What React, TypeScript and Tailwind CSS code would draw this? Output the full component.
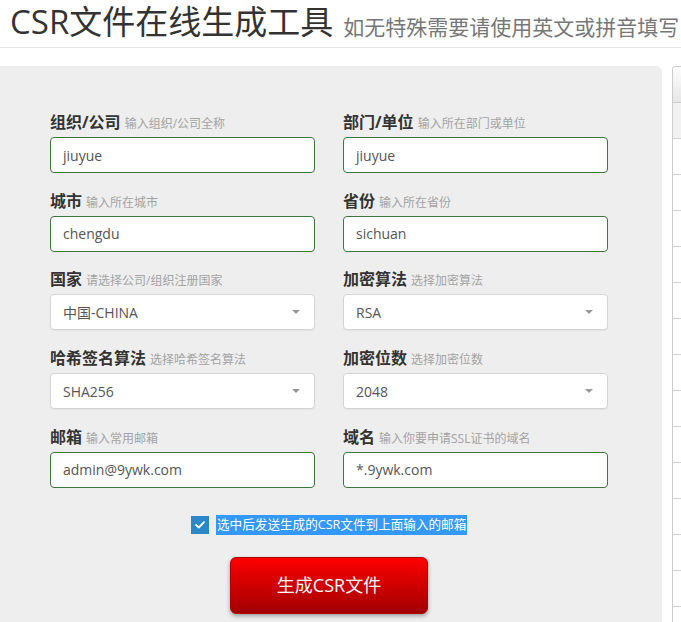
import React from 'react';

type Field = {
  label: string;
  hint: string;
  value: string;
  select?: boolean;
};

const fields: Field[] = [
  { label: '组织/公司', hint: '输入组织/公司全称', value: 'jiuyue' },
  { label: '部门/单位', hint: '输入所在部门或单位', value: 'jiuyue' },
  { label: '城市', hint: '输入所在城市', value: 'chengdu' },
  { label: '省份', hint: '输入所在省份', value: 'sichuan' },
  { label: '国家', hint: '请选择公司/组织注册国家', value: '中国-CHINA', select: true },
  { label: '加密算法', hint: '选择加密算法', value: 'RSA', select: true },
  { label: '哈希签名算法', hint: '选择哈希签名算法', value: 'SHA256', select: true },
  { label: '加密位数', hint: '选择加密位数', value: '2048', select: true },
  { label: '邮箱', hint: '输入常用邮箱', value: 'admin@9ywk.com' },
  { label: '域名', hint: '输入你要申请SSL证书的域名', value: '*.9ywk.com' },
];

const FormField: React.FC<{ field: Field }> = ({ field }) => (
  <div className="flex flex-col w-[265px]">
    <div className="flex items-baseline gap-1 h-[20px] leading-[20px] overflow-visible">
      <span className="text-[16px] font-bold text-[#333]">{field.label}</span>
      <span className="text-[12px] text-[#a3a3a3]">{field.hint}</span>
    </div>
    {field.select ? (
      <div className="mt-[5px] h-[36px] flex items-center justify-between px-3 bg-white border border-[#d4d4d4] rounded-[4px] shadow-[0_1px_1px_rgba(0,0,0,0.05)]">
        <span className="text-[14px] text-[#555]">{field.value}</span>
        <span className="w-0 h-0 border-l-[4px] border-r-[4px] border-t-[4px] border-l-transparent border-r-transparent border-t-[#999] mr-[2px]" />
      </div>
    ) : (
      <div className="mt-[5px] h-[36px] flex items-center px-3 bg-white border border-[#3c763d] rounded-[4px]">
        <span className="text-[14px] text-[#555]">{field.value}</span>
      </div>
    )}
  </div>
);

const App: React.FC = () => {
  const rows = Array.from({ length: 15 });

  return (
    <div
      className="w-[681px] h-[622px] overflow-hidden bg-white"
      style={{ fontFamily: '"Open Sans", "Noto Sans CJK SC", sans-serif' }}
    >
      {/* Title */}
      <div className="h-[48px] border-b border-[#e5e5e5] flex items-end pl-[10px] pb-[5px] whitespace-nowrap">
        <span className="text-[33px] leading-[40px] text-[#333]">CSR文件在线生成工具</span>
        <span className="text-[21px] leading-[30px] text-[#777] ml-[10px]">如无特殊需要请使用英文或拼音填写</span>
      </div>

      <div className="flex mt-[18px] gap-[10px]">
        {/* Form panel */}
        <div className="w-[662px] shrink-0 h-[560px] bg-[#eeeeee] rounded-tr-[6px] pt-[46px] pl-[50px]">
          <div className="grid grid-cols-[265px_265px] gap-x-[28px] gap-y-[17.7px]">
            {fields.map((f) => (
              <FormField key={f.label} field={f} />
            ))}
          </div>

          <div className="flex items-center mt-[27px] ml-[141px]">
            <span className="w-[18px] h-[18px] bg-[#2a88c8] flex items-center justify-center">
              <svg width="10" height="8" viewBox="0 0 10 8" fill="none">
                <path d="M1 4L3.8 6.5L9 1.2" stroke="white" strokeWidth="1.8" strokeLinecap="round" strokeLinejoin="round" />
              </svg>
            </span>
            <span className="ml-[7px] bg-[#3399ff] text-white text-[12.6px] leading-[20px] px-[1px]">
              选中后发送生成的CSR文件到上面输入的邮箱
            </span>
          </div>

          <div className="mt-[22px] ml-[180px] w-[198px] h-[57px] rounded-[6px] bg-gradient-to-b from-[#ff0000] to-[#a10000] border border-[#b00000] shadow-[0_2px_4px_rgba(0,0,0,0.35)] flex items-center justify-center">
            <span className="text-white text-[18px]">生成CSR文件</span>
          </div>
        </div>

        {/* Side table */}
        <div className="flex-1 border-l border-t border-[#cccccc] rounded-tl-[4px] overflow-hidden">
          <div className="h-[36px] bg-gradient-to-b from-white to-[#e6e6e6] border-b border-[#cccccc]" />
          {rows.map((_, i) => (
            <div
              key={i}
              className={`h-[36px] border-b border-[#d0d0d0] ${i === 0 ? 'bg-[#f2f2f2]' : 'bg-white'}`}
            />
          ))}
        </div>
      </div>
    </div>
  );
};

export default App;
